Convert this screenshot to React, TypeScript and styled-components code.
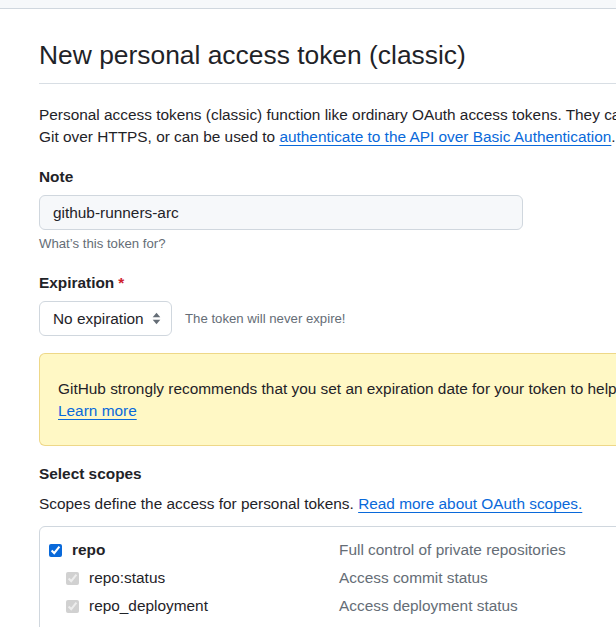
import React from 'react'
import styled, { createGlobalStyle } from 'styled-components'

const GlobalStyle = createGlobalStyle`
  html, body {
    margin: 0;
    padding: 0;
    overflow: hidden;
    background: #ffffff;
  }
  body {
    font-family: "Liberation Sans", Arial, sans-serif;
    font-size: 15.4px;
    line-height: 22px;
    color: #1f2328;
  }
`

const TopBar = styled.div`
  height: 8px;
  background: #f6f8fa;
  border-bottom: 1px solid #d0d7de;
`

const Main = styled.main`
  width: 980px;
  padding: 30px 0 0 39px;
`

const Header = styled.div`
  padding-bottom: 11px;
  border-bottom: 1px solid #d8dee4;
`

const Title = styled.h1`
  margin: 0;
  font-size: 26.4px;
  line-height: 33px;
  font-weight: 400;
`

const Text = styled.p<{ $top?: number }>`
  margin: ${p => p.$top ?? 0}px 0 0;
`

const Link = styled.a<{ $block?: boolean }>`
  color: #0969da;
  text-decoration: underline;
  text-underline-offset: 3px;
  text-decoration-thickness: 1px;
  display: ${p => (p.$block ? 'inline-block' : 'inline')};
`

const Label = styled.label<{ $top: number }>`
  display: block;
  margin-top: ${p => p.$top}px;
  font-weight: 700;
`

const Required = styled.span`
  color: #cf222e;
  margin-left: 4px;
`

const TextInput = styled.input`
  display: block;
  box-sizing: border-box;
  width: 484px;
  height: 35px;
  margin-top: 7px;
  padding: 0 13px;
  border: 1px solid #d0d7de;
  border-radius: 6px;
  background: #f6f8fa;
  font: inherit;
  color: #1f2328;
  outline: none;
`

const Hint = styled.span`
  font-size: 13.2px;
  line-height: 18px;
  color: #656d76;
`

const NoteHint = styled(Hint)`
  display: block;
  margin-top: 5px;
`

const ExpirationRow = styled.div`
  display: flex;
  align-items: center;
  gap: 13px;
  margin-top: 7px;
`

const SelectButton = styled.button`
  box-sizing: border-box;
  display: flex;
  align-items: center;
  justify-content: space-between;
  height: 35px;
  width: 133px;
  padding: 0 10px 0 13px;
  border: 1px solid #d0d7de;
  border-radius: 6px;
  background: #ffffff;
  font: inherit;
  color: #1f2328;
  white-space: nowrap;
`

const Flash = styled.div`
  margin-top: 17px;
  padding: 24px 18px 23px;
  border: 1px solid rgba(212, 167, 44, 0.4);
  border-radius: 6px;
  background: #fff8c5;
`

const SectionTitle = styled.h3`
  margin: 17px 0 0;
  font-size: 15.4px;
  line-height: 22px;
  font-weight: 700;
`

const ScopeBox = styled.div`
  margin-top: 11px;
  padding: 9px 0 0 9px;
  height: 120px;
  border: 1px solid #d0d7de;
  border-radius: 6px;
`

const ScopeRow = styled.div<{ $child?: boolean }>`
  display: grid;
  grid-template-columns: ${p => (p.$child ? '273px' : '290px')} 1fr;
  height: 28px;
  align-items: center;
  padding-left: ${p => (p.$child ? 17 : 0)}px;
`

const ScopeName = styled.label<{ $strong?: boolean }>`
  display: flex;
  align-items: center;
  gap: 10px;
  font-weight: ${p => (p.$strong ? 700 : 400)};
`

const Checkbox = styled.input`
  width: 13px;
  height: 13px;
  margin: 0;
  accent-color: #0969da;
`

const ScopeDesc = styled.span`
  color: #656d76;
`

const UpDown = () => (
  <svg width="9" height="13" viewBox="0 0 9 13" aria-hidden="true">
    <path d="M4.5 0.8 L8.3 5.2 H0.7 Z" fill="#656d76" />
    <path d="M4.5 12.2 L8.3 7.8 H0.7 Z" fill="#656d76" />
  </svg>
)

const scopes = [
  { name: 'repo', desc: 'Full control of private repositories', child: false },
  { name: 'repo:status', desc: 'Access commit status', child: true },
  { name: 'repo_deployment', desc: 'Access deployment status', child: true },
]

export default function App() {
  return (
    <>
      <GlobalStyle />
      <TopBar />
      <Main>
        <Header>
          <Title>New personal access token (classic)</Title>
        </Header>

        <Text $top={20}>
          Personal access tokens (classic) function like ordinary OAuth access tokens. They can be
          used instead of a password for
          <br />
          Git over HTTPS, or can be used to{' '}
          <Link href="#">authenticate to the API over Basic Authentication</Link>.
        </Text>

        <Label $top={18} htmlFor="note">
          Note
        </Label>
        <TextInput id="note" defaultValue="github-runners-arc" />
        <NoteHint>What’s this token for?</NoteHint>

        <Label $top={19}>
          Expiration<Required>*</Required>
        </Label>
        <ExpirationRow>
          <SelectButton type="button">
            No expiration
            <UpDown />
          </SelectButton>
          <Hint>The token will never expire!</Hint>
        </ExpirationRow>

        <Flash>
          GitHub strongly recommends that you set an expiration date for your token to help keep
          your information secure.
          <br />
          <Link href="#" $block>
            Learn more
          </Link>
        </Flash>

        <SectionTitle>Select scopes</SectionTitle>
        <Text $top={8}>
          Scopes define the access for personal tokens.{' '}
          <Link href="#">Read more about OAuth scopes.</Link>
        </Text>

        <ScopeBox>
          {scopes.map(s => (
            <ScopeRow key={s.name} $child={s.child}>
              <ScopeName $strong={!s.child}>
                <Checkbox type="checkbox" defaultChecked disabled={s.child} />
                {s.name}
              </ScopeName>
              <ScopeDesc>{s.desc}</ScopeDesc>
            </ScopeRow>
          ))}
        </ScopeBox>
      </Main>
    </>
  )
}
